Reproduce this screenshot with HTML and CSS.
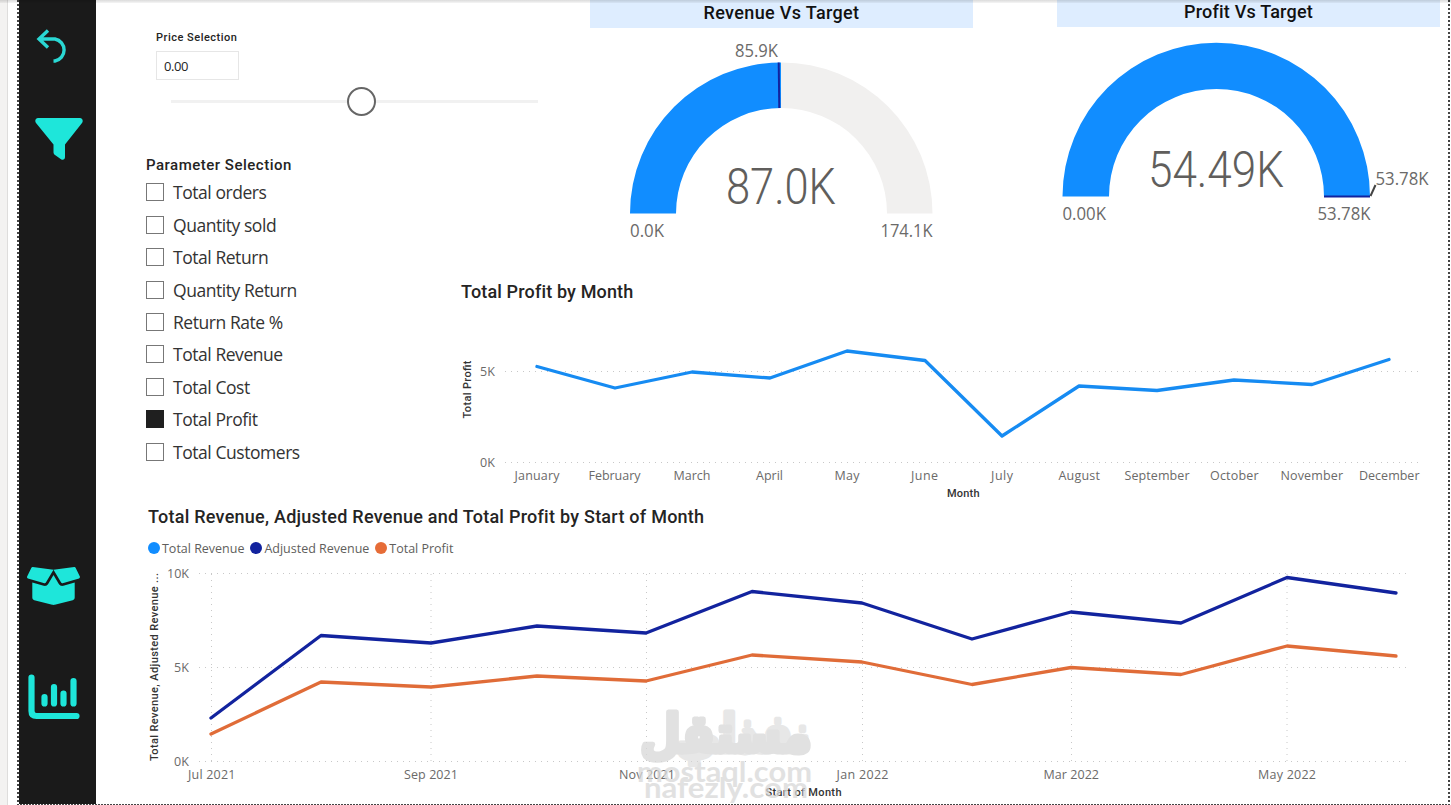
FILE: index.html
```
<!DOCTYPE html>
<html lang="en">
<head>
    <meta charset="UTF-8">
    <meta name="viewport" content="width=device-width, initial-scale=1.0">
    <title>Price Adjustment Report</title>
    <link rel="stylesheet" href="styles.css">
</head>
<body>
    <div class="page">
        <nav class="sidebar">
            <svg class="icon icon-back" viewBox="0 0 32 34" width="32" height="34">
                <path d="M12 1.5L3 10l9 8.5M3 10h16a11.2 11.2 0 0 1 0 22h-1.500" />
            </svg>
            <svg class="icon icon-filter" viewBox="0 0 48 42" width="48" height="42">
                <path d="M3 0h42c2.500 0 3.500 3 2 5L30 26.500V39c0 2.500-2 3.500-4 2.200l-6-4.200c-1-.7-1.500-1.500-1.500-2.700v-7.800L1 5C-.5 3 .5 0 3 0z" />
            </svg>
            <svg class="icon icon-box" viewBox="0 32 640 448" width="53" height="38" preserveAspectRatio="none">
                <path d="M425.700 256c-16.900 0-32.800-9-41.400-23.400L320 126l-64.200 106.600c-8.700 14.500-24.600 23.500-41.500 23.500-4.500 0-9-.6-13.300-1.900L64 215v178c0 14.700 10 27.500 24.200 31l216.200 54.100c10.200 2.500 20.900 2.500 31 0L551.800 424c14.200-3.600 24.200-16.400 24.200-31V215l-137 39.100c-4.300 1.300-8.800 1.900-13.300 1.900zm212.600-112.200L586.800 41c-3.100-6.200-9.800-9.800-16.700-8.900L320 64l91.700 152.100c3.800 6.300 11.400 9.300 18.500 7.300l197.900-56.500c9.900-2.900 14.700-13.900 10.200-23.100zM53.200 41L1.700 143.800c-4.600 9.200.3 20.200 10.100 23l197.900 56.500c7.100 2 14.700-1 18.500-7.300L320 64 69.800 32.100c-6.900-.8-13.500 2.700-16.600 8.900z" />
            </svg>
            <svg class="icon icon-chart" viewBox="0 0 52 46" width="52" height="46">
                <path d="M3.500 3.500V37q0 5 5 5H48.500M16.500 23v6.500M26 13v16.500M35.500 19.500v10M45.500 7v22.500" />
            </svg>
        </nav>

        <main class="report">
            <div class="top">
                <aside class="slicers">
                    <div class="price">
                        <h3>Price Selection</h3>
                        <div class="price-value">0.00</div>
                        <div class="slider"><span class="thumb"></span></div>
                    </div>

                    <div class="params">
                        <h3>Parameter Selection</h3>
                        <ul>
                            <li><span class="check"></span>Total orders</li>
                            <li><span class="check"></span>Quantity sold</li>
                            <li><span class="check"></span>Total Return</li>
                            <li><span class="check"></span>Quantity Return</li>
                            <li><span class="check"></span>Return Rate %</li>
                            <li><span class="check"></span>Total Revenue</li>
                            <li><span class="check"></span>Total Cost</li>
                            <li><span class="check checked"></span>Total Profit</li>
                            <li><span class="check"></span>Total Customers</li>
                        </ul>
                    </div>
                </aside>

                <div class="visuals">
                    <div class="gauges">
                        <section class="gauge">
                            <h2>Revenue Vs Target</h2>
                            <svg viewBox="0 0 383 222" width="383" height="222">
                                <path class="gauge-track" d="M191 34.500A151 151 0 0 1 342.500 185.500H297A105.500 105.500 0 0 0 191 80z" />
                                <path class="gauge-fill" d="M40 185.500A151 151 0 0 1 191 34.500V80A105.500 105.500 0 0 0 86 185.500z" />
                                <path class="gauge-target" d="M188.700 34.500L189.300 80" />
                                <text class="gauge-label" x="145" y="28.500" textLength="43" lengthAdjust="spacingAndGlyphs">85.9K</text>
                                <text class="gauge-label" x="40" y="208.500" textLength="34" lengthAdjust="spacingAndGlyphs">0.0K</text>
                                <text class="gauge-label" x="290.500" y="208.500" textLength="52" lengthAdjust="spacingAndGlyphs">174.1K</text>
                                <text class="gauge-value" x="136" y="176" textLength="110" lengthAdjust="spacingAndGlyphs">87.0K</text>
                            </svg>
                        </section>

                        <section class="gauge gauge-profit">
                            <h2>Profit Vs Target</h2>
                            <svg viewBox="0 0 383 222" width="383" height="222">
                                <path class="gauge-fill" d="M5.500 169.500A153.750 153.750 0 0 1 313 169.500H267A107.500 107.500 0 0 0 52 169.500z" />
                                <path class="gauge-target" d="M267 169.500H313" />
                                <path class="gauge-leader" d="M313.500 169L318.500 158" />
                                <text class="gauge-label" x="318.500" y="158" textLength="53" lengthAdjust="spacingAndGlyphs">53.78K</text>
                                <text class="gauge-label" x="5.500" y="193" textLength="43.500" lengthAdjust="spacingAndGlyphs">0.00K</text>
                                <text class="gauge-label" x="260.500" y="193" textLength="53" lengthAdjust="spacingAndGlyphs">53.78K</text>
                                <text class="gauge-value" x="91" y="160" textLength="136" lengthAdjust="spacingAndGlyphs">54.49K</text>
                            </svg>
                        </section>
                    </div>

                    <section class="chart chart-month">
                        <h2>Total Profit by Month</h2>
                        <svg viewBox="0 0 1008 195" width="1008" height="195">
                            <path class="grid" d="M65 61.500H978M65 152.500H978" />
                            <text class="tick" x="40" y="66" textLength="15">5K</text>
                            <text class="tick" x="40" y="157" textLength="15">0K</text>
                            <text class="axis-title" transform="translate(31 108.500) rotate(-90)" textLength="58">Total Profit</text>
                            <polyline class="line line-profit" points="97,56.500 175,78 252,62 330,68 407,41 485,50.500 562,126 639,76 717,80.500 794,70 872,74.500 949,49.500" />
                            <g class="tick">
                                <text x="74.500" y="170" textLength="45">January</text>
                                <text x="148.500" y="170" textLength="52">February</text>
                                <text x="233.500" y="170" textLength="37">March</text>
                                <text x="316" y="170" textLength="27">April</text>
                                <text x="394.500" y="170" textLength="25">May</text>
                                <text x="471" y="170" textLength="27">June</text>
                                <text x="551" y="170" textLength="22">July</text>
                                <text x="618.500" y="170" textLength="41.500">August</text>
                                <text x="684.500" y="170" textLength="65">September</text>
                                <text x="770" y="170" textLength="48.500">October</text>
                                <text x="840.500" y="170" textLength="62.500">November</text>
                                <text x="919" y="170" textLength="60.500">December</text>
                            </g>
                            <text class="axis-title" x="507" y="187" textLength="32.500">Month</text>
                        </svg>
                    </section>
                </div>
            </div>

            <section class="chart chart-trend">
                <h2>Total Revenue, Adjusted Revenue and Total Profit by Start of Month</h2>
                <div class="legend">
                    <span><i class="dot dot-revenue"></i>Total Revenue</span>
                    <span><i class="dot dot-adjusted"></i>Adjusted Revenue</span>
                    <span><i class="dot dot-profit"></i>Total Profit</span>
                </div>
                <svg viewBox="96 560 1352 243" width="1352" height="243">
                    <path class="grid" d="M199 573.500H1408M199 667.500H1408M199 761.500H1408" />
                    <path class="grid" d="M211.500 574V761M431 574V761M646.500 574V761M862.500 574V761M1071.500 574V761M1287 574V761" />
                    <text class="tick" x="167" y="578" textLength="22">10K</text>
                    <text class="tick" x="174" y="672" textLength="15">5K</text>
                    <text class="tick" x="174" y="766" textLength="15">0K</text>
                    <text class="axis-title" transform="translate(158 761) rotate(-90)" textLength="188">Total Revenue, Adjusted Revenue ...</text>
                    <polyline class="line line-adjusted" points="211,718 321,635.500 431,643 537,626 646,633 752,591.500 862,603 972,639 1071,612 1181,623 1287,577.500 1396,593" />
                    <polyline class="line line-total" points="211,734 321,682 431,687 537,676 646,681 752,655 862,662 972,684.500 1071,667.500 1181,674.500 1287,646 1396,656" />
                    <g class="tick">
                        <text x="188" y="779" textLength="47.500">Jul 2021</text>
                        <text x="404" y="779" textLength="54">Sep 2021</text>
                        <text x="619" y="779" textLength="56">Nov 2021</text>
                        <text x="836.500" y="779" textLength="52">Jan 2022</text>
                        <text x="1043.500" y="779" textLength="55.500">Mar 2022</text>
                        <text x="1258" y="779" textLength="58">May 2022</text>
                    </g>
                    <text class="axis-title" x="765.500" y="796" textLength="76">Start of Month</text>
                </svg>
            </section>
        </main>

        <svg class="watermark" viewBox="0 0 180 100" width="180" height="100">
            <text class="wm-arabic" x="4" y="47" textLength="172" lengthAdjust="spacingAndGlyphs">مستقل</text>
            <text class="wm-arabic wm-second" x="40" y="47" textLength="134" lengthAdjust="spacingAndGlyphs">نفذلي</text>
            <text class="wm-latin" x="1" y="77" textLength="175" lengthAdjust="spacingAndGlyphs">mostaql.com</text>
            <text class="wm-latin" x="8" y="93" textLength="164" lengthAdjust="spacingAndGlyphs">nafezly.com</text>
        </svg>
    </div>
</body>
</html>
```

FILE: styles.css
```
* {
    margin: 0;
    padding: 0;
    box-sizing: border-box;
}

body {
    width: 1451px;
    height: 805px;
    overflow: hidden;
    background: linear-gradient(90deg, #f3f2f1 7px, #dedddc 7px, #dedddc 8px, #fff 8px);
    font-family: "Open Sans", "Noto Sans", sans-serif;
    color: #252423;
}

/* canvas edge: dotted guides on the left, right and bottom */
.page {
    position: relative;
    width: 1433px;
    height: 805px;
    margin-left: 17px;
    padding: 0 2px 1px;
    display: flex;
    background:
        repeating-linear-gradient(#444 0 2px, #fff 2px 4px) left / 2px 100% no-repeat,
        repeating-linear-gradient(#444 0 2px, #fff 2px 4px) right / 2px 100% no-repeat,
        repeating-linear-gradient(90deg, #444 0 2px, #fff 2px 3px) bottom / 100% 1px no-repeat,
        #fff;
}

/* shadow of the toolbar above the canvas */
body::before {
    content: "";
    position: absolute;
    top: 0;
    left: 0;
    width: 100%;
    height: 3px;
    z-index: 2;
    background: linear-gradient(rgba(0, 0, 0, 0.14), rgba(0, 0, 0, 0.04));
}

h2,
h3 {
    font-family: Roboto, sans-serif;
    font-weight: 500;
}

svg {
    display: block;
}

/* sidebar */
.sidebar {
    width: 77px;
    height: 804px;
    padding-top: 29px;
    background: #1a1a1a;
    flex-shrink: 0;
}

.icon {
    fill: #1ee6da;
}

.icon-back {
    margin-left: 17px;
    fill: none;
    stroke: #2ad8d4;
    stroke-width: 3.4;
}

.icon-filter {
    margin: 55px 0 0 16px;
}

.icon-box {
    margin: 407px 0 0 8px;
}

.icon-chart {
    margin: 69px 0 0 9px;
    fill: none;
    stroke: #1ee6da;
    stroke-width: 6.2;
    stroke-linecap: round;
}

/* report */
.report {
    width: 1352px;
}

.top {
    display: flex;
    height: 505px;
}

.slicers {
    width: 344px;
    padding-left: 50px;
}

.price {
    padding: 31px 0 0 10px;
}

.price h3 {
    font-size: 11px;
    line-height: 14px;
    letter-spacing: 0.5px;
}

.price-value {
    width: 83px;
    height: 29px;
    margin-top: 6px;
    padding-left: 7px;
    border: 1px solid #e6e6e6;
    font-size: 13px;
    line-height: 28px;
    letter-spacing: -0.4px;
}

.slider {
    display: flex;
    align-items: center;
    width: 367px;
    height: 3px;
    margin: 20px 0 0 15px;
    background: #f1f1f1;
}

.thumb {
    width: 29px;
    height: 29px;
    margin-left: 176px;
    border: 2px solid #666;
    border-radius: 50%;
    background: #fff;
    flex-shrink: 0;
}

.params {
    margin-top: 52px;
}

.params h3 {
    font-size: 15px;
    line-height: 20px;
    letter-spacing: 0.5px;
}

.params ul {
    list-style: none;
    margin-top: 1.2px;
}

.params li {
    display: flex;
    align-items: center;
    height: 32.4px;
    color: #333;
    font-size: 17.5px;
    letter-spacing: -0.45px;
}

.check {
    width: 18px;
    height: 18px;
    margin-right: 9px;
    border: 1px solid #777;
}

.checked {
    border-color: #1f1f1f;
    background: #1f1f1f;
}

/* gauges */
.gauges {
    display: flex;
    gap: 84px;
    height: 272px;
    padding-left: 150px;
}

.gauge {
    width: 383px;
}

.gauge h2 {
    height: 28px;
    background: #deedff;
    color: #111;
    font-size: 18px;
    line-height: 26px;
    letter-spacing: 0.35px;
    text-align: center;
}

.gauge-profit h2 {
    height: 27px;
    line-height: 24px;
    letter-spacing: 0.2px;
}

.gauge-track {
    fill: #f1f0ef;
}

.gauge-fill {
    fill: #118dff;
}

.gauge-target {
    stroke: #12239e;
    stroke-width: 2;
}

.gauge-leader {
    stroke: #444;
    stroke-width: 2;
}

.gauge-label {
    fill: #6b6a69;
    font-size: 17.5px;
}

.gauge-value {
    fill: #605e5c;
    font-family: Roboto, sans-serif;
    font-size: 50px;
    font-weight: 300;
}

/* charts */
.chart h2 {
    font-size: 18px;
    letter-spacing: 0.15px;
    white-space: nowrap;
}

.chart-month h2 {
    height: 38px;
    padding-left: 21px;
    line-height: 40px;
}

.chart-trend h2 {
    height: 31px;
    padding-left: 52px;
    line-height: 24px;
    letter-spacing: 0.25px;
}

.grid {
    fill: none;
    stroke: #c8c8c8;
    stroke-width: 1;
    stroke-dasharray: 1 5;
}

.tick {
    fill: #6b6a69;
    font-size: 12.5px;
}

.axis-title {
    fill: #333;
    font-family: Roboto, sans-serif;
    font-size: 11px;
    font-weight: 500;
}

.line {
    fill: none;
    stroke-width: 3.3;
    stroke-linecap: round;
    stroke-linejoin: round;
}

.line-profit {
    stroke: #168bf2;
}

.line-adjusted {
    stroke: #12239e;
}

.line-total {
    stroke: #e06c38;
}

.legend {
    display: flex;
    gap: 6px;
    height: 24px;
    padding-left: 52px;
    color: #605e5c;
    font-size: 12.5px;
    line-height: 25px;
    letter-spacing: -0.01px;
}

.legend span {
    display: flex;
    align-items: center;
}

.dot {
    width: 12px;
    height: 12px;
    margin-right: 2px;
    border-radius: 50%;
}

.dot-revenue {
    background: #118dff;
}

.dot-adjusted {
    background: #12239e;
}

.dot-profit {
    background: #e66c37;
}

.watermark {
    position: absolute;
    left: 619px;
    top: 705px;
    overflow: visible;
    opacity: 0.75;
    fill: #d8d8d8;
}

.wm-arabic {
    font-family: "DejaVu Sans", sans-serif;
    font-size: 52px;
    font-weight: 700;
    stroke: #d8d8d8;
    stroke-width: 5;
    stroke-linejoin: round;
}

.wm-second {
    opacity: 0.8;
}

.wm-latin {
    font-family: Lato, sans-serif;
    font-size: 28px;
    font-weight: 700;
}
```
